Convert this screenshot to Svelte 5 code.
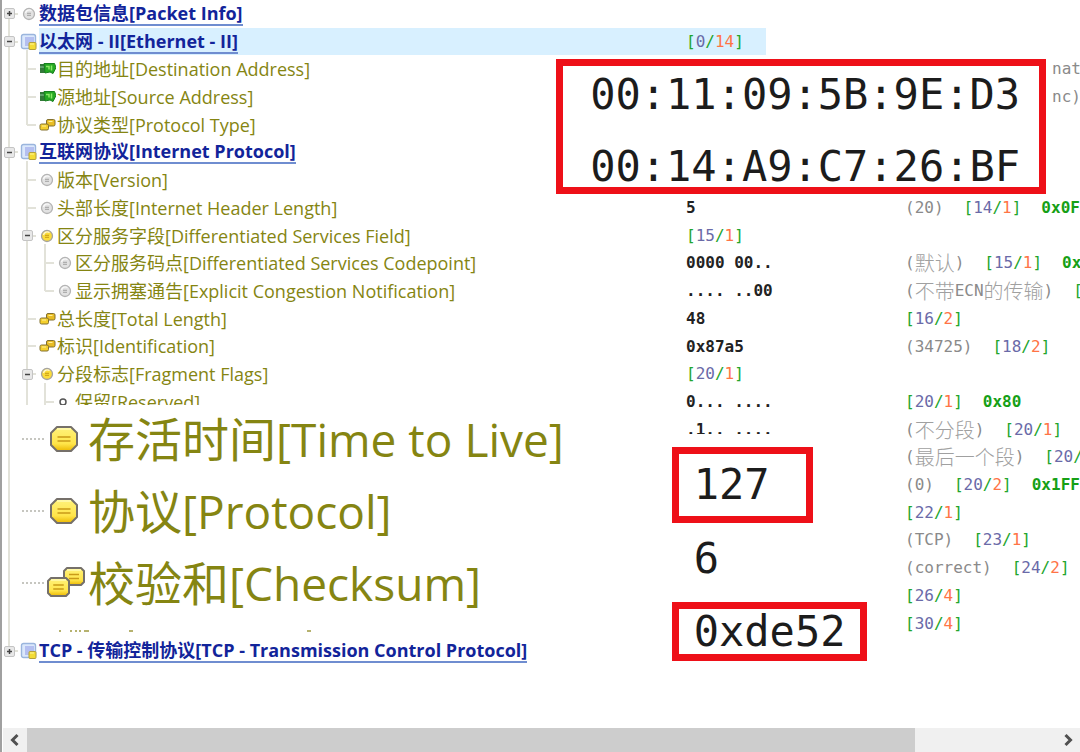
<script>
  const rows = [
    { depth: 0, icon: 'grey', zh: '数据包信息', en: '[Packet Info]', toggle: 'plus', first: true },
    { depth: 0, icon: 'layer', zh: '以太网', mid: ' - II', en: '[Ethernet - II]', toggle: 'minus', selected: true, value: '[0/14]' },
    { depth: 1, icon: 'card', zh: '目的地址', en: '[Destination Address]', tail: 'nat' },
    { depth: 1, icon: 'card', zh: '源地址', en: '[Source Address]', tail: 'nc)' },
    { depth: 1, icon: 'pair', zh: '协议类型', en: '[Protocol Type]', last: true },
    { depth: 0, icon: 'layer', zh: '互联网协议', en: '[Internet Protocol]', toggle: 'minus' },
    { depth: 1, icon: 'grey', zh: '版本', en: '[Version]' },
    { depth: 1, icon: 'grey', zh: '头部长度', en: '[Internet Header Length]', value: '5', notes: ['(20)', '[14/1]', '0x0F'] },
    { depth: 1, icon: 'gold', zh: '区分服务字段', en: '[Differentiated Services Field]', toggle: 'minus', value: '[15/1]' },
    { depth: 2, icon: 'grey', zh: '区分服务码点', en: '[Differentiated Services Codepoint]', value: '0000 00..', notes: ['(默认)', '[15/1]', '0x'] },
    { depth: 2, icon: 'grey', zh: '显示拥塞通告', en: '[Explicit Congestion Notification]', last: true, value: '.... ..00', notes: ['(不带ECN的传输)', '['] },
    { depth: 1, icon: 'pair', zh: '总长度', en: '[Total Length]', value: '48', notes: ['[16/2]'] },
    { depth: 1, icon: 'pair', zh: '标识', en: '[Identification]', value: '0x87a5', notes: ['(34725)', '[18/2]'] },
    { depth: 1, icon: 'gold', zh: '分段标志', en: '[Fragment Flags]', toggle: 'minus', value: '[20/1]' },
    { depth: 2, icon: 'bit', zh: '保留', en: '[Reserved]', value: '0... ....', notes: ['[20/1]', '0x80'] },
    { value: '.1.. ....', cut: true, notes: ['(不分段)', '[20/1]'] },
    { notes: ['(最后一个段)', '[20/'] },
    { notes: ['(0)', '[20/2]', '0x1FF'] },
    { notes: ['[22/1]'] },
    { notes: ['(TCP)', '[23/1]'] },
    { notes: ['(correct)', '[24/2]'] },
    { notes: ['[26/4]'] },
    { notes: ['[30/4]'] },
    { depth: 0, icon: 'layer', pre: 'TCP - ', zh: '传输控制协议', en: '[TCP - Transmission Control Protocol]', toggle: 'plus', last: true }
  ];

  const enlarged = [
    { icon: 'single', zh: '存活时间', en: '[Time to Live]' },
    { icon: 'single', zh: '协议', en: '[Protocol]' },
    { icon: 'double', zh: '校验和', en: '[Checksum]' }
  ];

  // Splits a cell into coloured runs: brackets, offset, length, Chinese, plain.
  function runs(text) {
    if (text.startsWith('[')) {
      const m = text.match(/^(\[)(\d*)(\/?)(\d*)(\]?)$/);
      return [['mark', m[1]], ['offset', m[2]], ['mark', m[3]], ['length', m[4]], ['mark', m[5]]].filter((r) => r[1]);
    }
    if (text.startsWith('(')) {
      return text.split(/([\u4e00-\u9fff]+)/).filter(Boolean).map((t) => [/[\u4e00-\u9fff]/.test(t) ? 'note han' : 'note', t]);
    }
    return [['plain', text]];
  }
</script>

{#snippet cell(text)}
  <span class="cell">{#each runs(text) as [kind, t]}<span class={kind}>{t}</span>{/each}</span>
{/snippet}

{#snippet smallIcon(kind)}
  <svg class="glyph" viewBox="0 0 18 18" width="18" height="18" aria-hidden="true">
    {#if kind === 'grey' || kind === 'gold'}
      <circle cx="9" cy="9" r="5.5" fill={kind === 'gold' ? '#fbdc3a' : '#e2e2e2'} stroke={kind === 'gold' ? '#a5a3a0' : '#b4b4b4'} stroke-width="1.3" />
      <path d="M5.5 8a4 4 0 0 1 6-2.5" fill="none" stroke="#fff" stroke-width="1.3" opacity=".8" />
      <path d="M7 8.3h4M7 10.3h4" stroke={kind === 'gold' ? '#c99c14' : '#a2a2a2'} />
    {:else if kind === 'layer'}
      <rect x="1.5" y="1.5" width="14" height="14" rx="2" fill="#dbe8fb" stroke="#9ab5dd" stroke-width="1.4" />
      <rect x="5" y="4" width="9" height="9" fill="#b4bff0" />
      <rect x="9" y="9.5" width="7" height="7" rx="1" fill="#f3dc36" stroke="#b5a13c" />
      <path d="M10 11h4" stroke="#fff79a" />
    {:else if kind === 'card'}
      <rect x="2" y="4" width="5" height="9" fill="#33793a" />
      <path d="M2 7h4" stroke="#91c9a0" />
      <path d="M6 3.5h10.5l1.500 4-3 6-3-1.500-5 1z" fill="#25a923" stroke="#178020" />
      <path d="M8 6.5h3v3M13.500 5.500v5" stroke="#8bea68" fill="none" stroke-width="1.5" />
    {:else if kind === 'pair'}
      <rect x="8.5" y="3.5" width="8.5" height="6.5" rx="1.5" fill="#e9bd25" stroke="#83702f" />
      <rect x="2" y="8" width="8.5" height="6" rx="1.5" fill="#f4cf2d" stroke="#83702f" />
      <path d="M4 10h4M10.500 5.500h4" stroke="#fff19b" />
    {:else}
      <circle cx="7" cy="9" r="3" fill="#fff" stroke="#555" stroke-width="1.5" />
    {/if}
  </svg>
{/snippet}

{#snippet bubble(x, y, w, h, c)}
  <path d={`M${x + c} ${y}H${x + w - c}L${x + w} ${y + c}V${y + h - c}L${x + w - c} ${y + h}H${x + c}L${x} ${y + h - c}V${y + c}Z`} fill="url(#gold)" stroke="#75706a" stroke-width="2" stroke-linejoin="round" />
  <path d={`M${x + c} ${y + 2}H${x + w - c}`} stroke="#fffbb5" stroke-width="1.5" />
  <path d={`M${x + w / 4} ${y + h / 2 - 2}h${w / 2}m0 4h${-w / 2}`} stroke="#c99a18" stroke-width="1.5" fill="none" />
{/snippet}

<main class="viewer">
  <svg class="defs" width="0" height="0" aria-hidden="true">
    <linearGradient id="gold" x1="0" y1="0" x2="0" y2="1">
      <stop offset="0" stop-color="#fff27c" />
      <stop offset=".7" stop-color="#ffe54a" />
      <stop offset="1" stop-color="#ecb800" />
    </linearGradient>
  </svg>
  <section class="pane">
    <span class="trunk"></span>
    {#each rows as row, i}
      {#if row.zh}
        <div class="label" class:clipped={row.icon === 'bit'} style:grid-row={i + 1}>
          {#each Array(row.depth + 1) as _, d}
            {@const own = d === row.depth}
            <span class="guide" class:line={!(own && (row.first || row.last))} class:top={own && row.last} class:bottom={own && row.first} class:branch={own}>
              {#if own && row.toggle}
                <button class="toggle" aria-label={`${row.toggle === 'plus' ? 'Expand' : 'Collapse'} ${row.zh}`}>
                  <svg viewBox="0 0 9 9" width="9" height="9"><path d={row.toggle === 'plus' ? 'M2 4.500h5M4.500 2v5' : 'M2 4.500h5'} stroke="#444" stroke-width="1.500" /></svg>
                </button>
              {/if}
            </span>
          {/each}
          <span class="icon" class:stem={row.toggle === 'minus'}>{@render smallIcon(row.icon)}</span>
          <span class="name" class:selected={row.selected}>
            {#if row.depth === 0}
              <a href={`#layer-${i}`}>{row.pre ?? ''}<span class="zh">{row.zh}</span>{row.mid ?? ''}{row.en}</a>
            {:else}
              <span class="field"><span class="zh">{row.zh}</span>{row.en}</span>
            {/if}
          </span>
        </div>
      {/if}
      {#if row.value}
        <div class="value" class:selected={row.selected} class:cut={row.cut} style:grid-row={i + 1}>{@render cell(row.value)}</div>
      {/if}
      {#if row.notes}
        <div class="notes" style:grid-row={i + 1}>{#each row.notes as n}{@render cell(n)}{/each}</div>
      {/if}
      {#if row.tail}
        <div class="notes tail" style:grid-row={i + 1}><span class="note">{row.tail}</span></div>
      {/if}
    {/each}

    <div class="enlarged">
      {#each enlarged as item}
        <div class="big-row">
          <span class="dots"></span>
          <svg class="big-icon" viewBox="0 0 42 42" width="42" height="42" aria-hidden="true">
            {#if item.icon === 'double'}
              {@render bubble(18, 6, 20, 17, 3)}
              {@render bubble(2, 16, 21, 18, 3)}
            {:else}
              {@render bubble(5, 9, 26, 24, 6)}
            {/if}
          </svg>
          <span class="big-name"><span class="big-zh">{item.zh}</span>{item.en}</span>
        </div>
      {/each}
      <svg class="specks" viewBox="0 0 300 4" width="300" height="4" aria-hidden="true">
        <path d="M19 2h2M30 2h2M35 2h2M39 2h2M44 2h5M89 2h4M267 2h4" stroke="#a5a04c" stroke-width="2" opacity=".8" />
      </svg>
    </div>

    <div class="callout addresses"><span>00:11:09:5B:9E:D3</span><span>00:14:A9:C7:26:BF</span></div>
    <div class="callout ttl">127</div>
    <div class="callout protocol">6</div>
    <div class="callout checksum">0xde52</div>
  </section>

  <div class="scrollbar">
    <button class="arrow" aria-label="Scroll left"><svg viewBox="0 0 12 14" width="12" height="14"><path d="M8.500 2L3.500 7l5 5" /></svg></button>
    <div class="track"><div class="thumb"></div></div>
    <button class="arrow" aria-label="Scroll right"><svg viewBox="0 0 12 14" width="12" height="14"><path d="M3.500 2l5 5-5 5" /></svg></button>
  </div>
</main>

<style>
  :global(body) { margin: 0; background: #fff; }
  .viewer {
    display: flex; flex-direction: column; box-sizing: border-box;
    height: 100vh; min-height: 680px; overflow: hidden;
    box-shadow: inset 2px 0 #a0a0a0;
    font-family: "Open Sans", "Noto Sans CJK SC", sans-serif; font-size: 18px;
    color: #858512;
  }
  .defs { position: absolute; }
  .pane {
    position: relative; flex: 1; min-height: 0;
    display: grid; grid-template-columns: minmax(0, 686fr) minmax(0, 219fr) minmax(0, 175fr);
    grid-template-rows: repeat(24, minmax(0, 1fr)); padding-bottom: 63px;
  }
  .trunk { grid-column: 1; grid-row: 15 / 24; width: 2px; margin-left: 8px; background: #e2e2d9; }
  .label { grid-column: 1; display: flex; min-width: 0; line-height: 28px; white-space: nowrap; }
  .clipped { height: 17px; overflow: hidden; }
  .clipped > * { height: 28px; }
  .zh { font-family: "Noto Sans CJK SC", sans-serif; font-size: 18px; line-height: 20px; }
  .guide {
    flex: none; width: 18px; display: flex; align-items: center; justify-content: center;
    background-repeat: no-repeat; --c: #e2e2d9;
    --v: linear-gradient(var(--c), var(--c)); --h: linear-gradient(#fff0, #fff0);
    background-image: var(--h), var(--v);
    background-size: 9px 2px, 2px 0; background-position: right center, 8px 0;
  }
  .branch { --h: linear-gradient(var(--c), var(--c)); }
  .line { background-size: 9px 2px, 2px 100%; }
  .top { background-size: 9px 2px, 2px 50%; }
  .bottom { background-size: 9px 2px, 2px 50%; background-position: right center, 8px 100%; }
  .toggle { all: unset; width: 9px; height: 9px; display: flex; background: #e8e8e8; border: 1px solid #c4c4c4; border-radius: 2px; }
  .icon { flex: none; width: 21px; display: flex; align-items: center; justify-content: center; }
  .icon.stem {
    background: linear-gradient(#e2e2d9, #e2e2d9) 8px 100% / 2px 5px no-repeat;
  }
  .name { flex: 1; min-width: 0; display: flex; align-items: center; }
  .name a { color: #12249a; font-weight: 700; text-decoration: none; line-height: 22px; border-bottom: 2px solid #6f8dd0; white-space: pre; }
  .selected { background: #d8f0ff; }

  .value, .notes { font-family: "DejaVu Sans Mono", monospace; font-size: 16px; line-height: 28px; white-space: pre; }
  .cell { display: inline-flex; align-items: center; height: 28px; }
  .value { grid-column: 2; color: #222; }
  .value.selected { width: 80px; }
  .value.cut { height: 18px; overflow: hidden; }
  .notes { grid-column: 3; display: flex; gap: 20px; overflow-x: clip; color: #16a016; }
  .value .plain, .notes .plain { font-weight: 700; }
  .notes.tail { padding-left: 147px; }
  .mark { color: #22a52c; }
  .offset { color: #6a6aa8; }
  .length { color: #ff7446; }
  .note { color: #8a8a8a; }
  .han { font-family: "Noto Sans CJK SC", sans-serif; font-size: 20px; line-height: 28px; font-weight: 300; color: #a0a0a0; }

  .enlarged {
    grid-column: 1; grid-row: 15 / 24; margin: 15px 120px 0 20px; display: flex; flex-direction: column;
  }
  .big-row { flex: none; height: 72px; display: flex; align-items: center; font-size: 46px; line-height: 72px; white-space: nowrap; }
  .big-zh { font-family: "Noto Sans CJK SC", sans-serif; font-size: 47px; line-height: 60px; }
  .dots { width: 24px; margin-right: 2px; height: 2px; background: repeating-linear-gradient(90deg, #fff 0 2px, #c6c6c0 2px 4px); }
  .big-icon { flex: none; }
  .specks { margin-top: 10px; margin-left: 20px; }

  .callout {
    position: absolute; box-sizing: border-box; display: flex; flex-direction: column; justify-content: center;
    font-family: "DejaVu Sans Mono", monospace; font-size: 42px; line-height: 72px; color: #1c1c1c;
    border: 7px solid #ee1018; background: #fff; padding-left: 15px; white-space: nowrap;
  }
  .addresses { left: 51.5%; top: 59px; width: 490px; height: 135px; padding: 8px 0 0 27px; }
  .ttl { left: 62.2%; top: 447px; width: 141px; height: 76px; }
  .protocol { left: 62.2%; top: 523px; height: 72px; border-color: transparent; background: none; }
  .checksum { left: 62.2%; top: 602px; width: 195px; height: 59px; }

  .scrollbar { flex: none; height: 24px; display: flex; margin-left: 3px; background: #f0f0f0; }
  .arrow { all: unset; width: 24px; display: flex; align-items: center; justify-content: center; }
  .arrow path { fill: none; stroke: #505050; stroke-width: 3; }
  .track { flex: 1; display: flex; }
  .thumb { width: 86.3%; background: #cdcdcd; }
</style>
